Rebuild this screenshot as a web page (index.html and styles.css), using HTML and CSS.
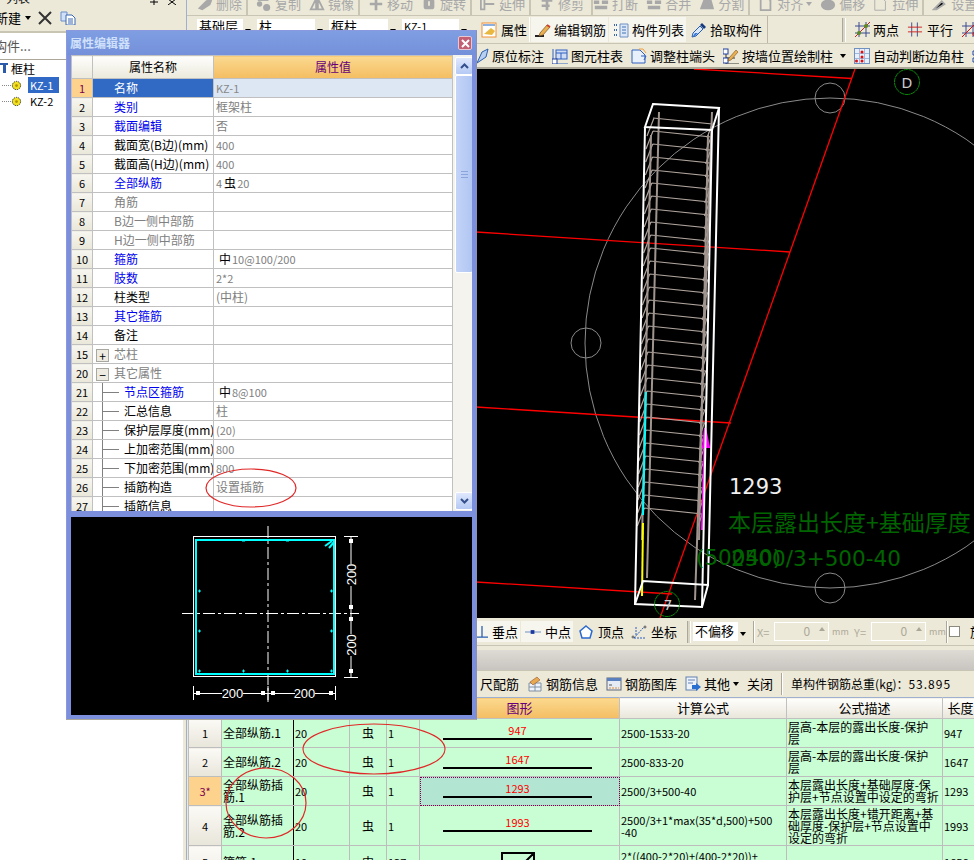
FILE: index.html
```html
<!DOCTYPE html>
<html lang="zh">
<head>
<meta charset="utf-8">
<title>属性编辑器</title>
<link rel="stylesheet" href="styles.css">
</head>
<body>
<div class="app">
  <aside class="side">
    <div class="side-head"><span class="cut">列表</span><span class="side-marks">
      <svg class="mark" viewBox="0 0 12 6"><path d="M6 0v6M2 3h8" stroke="#000"/></svg>
      <svg class="mark" viewBox="0 0 12 6"><path d="M2 0l8 6M10 0L2 6" stroke="#000"/></svg></span></div>
    <div class="side-tools">
      <span class="cut-left">新建</span><span class="caret"></span>
      <svg class="ico-x" viewBox="0 0 14 14"><path d="M1 1l12 12M13 1L1 13" stroke="#333" stroke-width="2"/></svg>
      <svg class="ico-m" viewBox="0 0 16 14"><path d="M1 1h6v9H1z" fill="#cfe0f8" stroke="#6d8ec8"/><path d="M6 4h6l3 3v7H6z" fill="#fff" stroke="#3a66b0"/><path d="M8 8h5M8 10h5M8 12h5" stroke="#3a66b0"/></svg>
    </div>
    <div class="side-search"><span class="search-text">构件...</span></div>
    <ul class="tree">
      <li class="tree-root"><svg class="ico-root" viewBox="0 0 9 13"><path d="M0 1h8v2H0zM3 3h3v8H3z" fill="#2a5aa8"/></svg><span>框柱</span></li>
      <li class="tree-item">
        <span class="dots"></span>
        <svg class="gear" viewBox="0 0 12 12"><circle cx="6" cy="6" r="4.5" fill="#f0e020" stroke="#222" stroke-dasharray="1.5 1"/><circle cx="6" cy="6" r="1.5" fill="#b09000"/></svg>
        <span class="tree-label sel">KZ-1</span>
      </li>
      <li class="tree-item">
        <span class="dots"></span>
        <svg class="gear" viewBox="0 0 12 12"><circle cx="6" cy="6" r="4.5" fill="#f0e020" stroke="#222" stroke-dasharray="1.5 1"/><circle cx="6" cy="6" r="1.5" fill="#b09000"/></svg>
        <span class="tree-label">KZ-2</span>
      </li>
    </ul>
  </aside>

  <main class="main">
    <div class="bar bar-top">
      <span class="t"><svg class="i" viewBox="0 0 18 16"><path d="M1 13l9-9 5-2 2 2-2 5-9 6z" fill="#a8a8a8"/></svg>删除</span>
      <span class="t g6"><svg class="i" viewBox="0 0 18 16"><circle cx="4" cy="8" r="3" fill="#a8a8a8"/><circle cx="12" cy="12" r="4" fill="#a8a8a8"/><path d="M2 3h12" stroke="#a8a8a8" stroke-width="3"/></svg>复制</span>
      <span class="t"><svg class="i" viewBox="0 0 18 16"><path d="M8 2L2 14h6zM10 2l6 12h-6z" fill="none" stroke="#a8a8a8" stroke-width="2"/></svg>镜像</span>
      <span class="t g6"><svg class="i" viewBox="0 0 18 16"><path d="M9 1v14M2 8h14" stroke="#a8a8a8" stroke-width="3"/></svg>移动</span>
      <span class="t"><svg class="i" viewBox="0 0 18 16"><rect x="3" y="2" width="12" height="12" rx="3" fill="#a8a8a8"/><path d="M9 5v5" stroke="#ece9d8" stroke-width="2"/></svg>旋转</span>
      <span class="t g6"><svg class="i" viewBox="0 0 18 16"><path d="M1 2h4v12H1zM6 8h10" stroke="#a8a8a8" stroke-width="2" fill="none"/></svg>延伸</span>
      <span class="t g6"><svg class="i" viewBox="0 0 18 16"><path d="M3 4h12M3 10h9M9 1v14" stroke="#a8a8a8" stroke-width="3"/></svg>修剪</span>
      <span class="t g1"><svg class="i" viewBox="0 0 18 16"><path d="M1 6h6M10 6h7M2 12h14" stroke="#a8a8a8" stroke-width="4"/></svg>打断</span>
      <span class="t"><svg class="i" viewBox="0 0 18 16"><path d="M1 6h6M10 6h7M2 12h14" stroke="#a8a8a8" stroke-width="4"/></svg>合并</span>
      <span class="t"><svg class="i" viewBox="0 0 18 16"><path d="M1 14L5 3h9l3 11z" fill="#a8a8a8"/></svg>分割</span>
      <span class="t g6"><svg class="i" viewBox="0 0 18 16"><path d="M3 1h8l3 3v11H3z" fill="none" stroke="#a8a8a8" stroke-width="2"/></svg>对齐<span class="caret dim"></span></span>
      <span class="t"><svg class="i" viewBox="0 0 18 16"><ellipse cx="9" cy="9" rx="8" ry="6" fill="#a8a8a8"/></svg>偏移</span>
      <span class="t"><svg class="i" viewBox="0 0 18 16"><path d="M2 2h9l3 3v10H2z" fill="none" stroke="#a8a8a8"/></svg>拉伸</span>
      <span class="t g6"><svg class="i" viewBox="0 0 18 16"><path d="M2 14l9-9 3 3-9 6zM2 2h8" stroke="#a8a8a8" stroke-width="2"/></svg>设置</span>
    </div>

    <div class="bar bar-combo">
      <div class="combos">
        <span class="combo c1">基础层<i class="drop"></i></span>
        <span class="combo c2">柱<i class="drop"></i></span>
        <span class="combo c3">框柱<i class="drop"></i></span>
        <span class="combo c4"><span class="lat">KZ-1</span><i class="drop"></i></span>
      </div>
      <div class="btn-group">
        <span class="b on"><svg class="i" viewBox="0 0 16 16"><rect x="1" y="1" width="14" height="14" fill="#fff" stroke="#f09030"/><path d="M2 3h12" stroke="#8cb0e0" stroke-width="2"/><path d="M3 12l7-6 4 3-3 4z" fill="#e8b840"/></svg>属性</span>
        <span class="b st"><svg class="i" viewBox="0 0 16 16"><path d="M0 14h9" stroke="#222" stroke-width="2"/><path d="M5 11l7-8 3 2-7 8-4 1z" fill="#e8b050" stroke="#7a5020" stroke-width=".7"/><path d="M12 3l3 2" stroke="#d04030" stroke-width="2"/></svg>编辑钢筋</span>
        <span class="b st"><svg class="i" viewBox="0 0 16 16"><path d="M7 2h8v13H7z" fill="#dce8f8" stroke="#7090c0"/><path d="M9 5h4M9 8h4M9 11h4" stroke="#4070b0"/><path d="M1 3h3M1 8h3M1 13h3" stroke="#3a66b0" stroke-width="2" stroke-dasharray="1 1"/></svg>构件列表</span>
        <span class="b"><svg class="i" viewBox="0 0 16 16"><path d="M1 15l1-4 7-7 3 3-7 7z" fill="#dbe8fa" stroke="#2a5fb0"/><path d="M9 3l2-2 4 4-2 2z" fill="#183a80"/><path d="M2 14l2-3 3 0-3 3z" fill="#3a7ad8"/></svg>拾取构件</span>
      </div>
      <div class="btn-group2">
        <span class="grip"></span>
        <span class="b2"><svg class="i2" viewBox="0 0 17 17"><path d="M1 5h15M1 12h15M5 1v15M12 1v15" stroke="#3a4a90"/><path d="M1 16L16 1" stroke="#d02020"/><circle cx="12" cy="5" r="2" fill="#5a8a20"/><circle cx="5" cy="12" r="2" fill="#5a8a20"/></svg>两点</span>
        <span class="b2"><svg class="i2 n" viewBox="0 0 17 17"><path d="M5 1v15M11 1v15" stroke="#3a4a90"/><path d="M1 6h15M1 11h15" stroke="#d02020"/></svg>平行</span>
        <span class="b2"><svg class="i2" viewBox="0 0 17 17"><path d="M1 5h15M1 12h15M5 1v15M12 1v15" stroke="#3a4a90"/><path d="M1 16L16 1" stroke="#e01010"/><circle cx="14" cy="13" r="2" fill="none" stroke="#e01010"/></svg></span>
      </div>
    </div>

    <div class="bar bar-third">
      <span class="t3"><svg class="i3 clip" viewBox="0 0 12 16"><path d="M0 15l5-11 6-3-2 8z" fill="#b9cff0" stroke="#2a5fb0"/></svg>原位标注</span>
      <span class="t3"><svg class="i3" viewBox="0 0 16 16"><path d="M1 1v15h15" fill="none" stroke="#3060c0"/><rect x="4" y="2" width="11" height="9" fill="#cfdcf4" stroke="#3060c0"/><path d="M4 5h11M9 5v6" stroke="#3060c0"/><rect x="0" y="11" width="5" height="5" fill="#fff" stroke="#2040a0"/></svg>图元柱表</span>
      <span class="t3"><svg class="i3" viewBox="0 0 16 16"><path d="M1 2h8l5 5v8H1z" fill="#e8f0fc" stroke="#3060c0"/><path d="M8 1h4l3 4" fill="none" stroke="#f0a040"/><path d="M10 8h5l-2 4" fill="none" stroke="#3060c0"/></svg>调整柱端头</span>
      <span class="t3"><svg class="i3" viewBox="0 0 16 16"><path d="M3 1v15h13M3 10h9" fill="none" stroke="#333"/><rect x="0" y="1" width="5" height="5" fill="#fff" stroke="#2040a0"/><rect x="0" y="10" width="5" height="5" fill="#fff" stroke="#2040a0"/><path d="M6 10l7-8 2 2-7 8-3 1z" fill="#e8b050" stroke="#7a5020" stroke-width=".6"/></svg>按墙位置绘制柱<span class="caret gap"></span></span>
      <span class="t3"><svg class="i3" viewBox="0 0 16 16"><rect x=".5" y=".5" width="15" height="15" fill="#e8effa" stroke="#7090c0"/><path d="M5.5 1v14M10.5 1v14M1 5.5h14M1 10.5h14" stroke="#a0b8dc"/><circle cx="8" cy="4" r="1.5" fill="#e01010"/><circle cx="8" cy="9" r="1.5" fill="#e01010"/><circle cx="2.500" cy="13" r="1.500" fill="#e01010"/><circle cx="8" cy="13" r="1.500" fill="#e01010"/></svg>自动判断边角柱</span>
      <svg class="i3" viewBox="0 0 16 16"><path d="M1 3h4v4H1zM1 10h4v4H1z" fill="#fff" stroke="#2040a0"/><path d="M6 5h9M6 12h9" stroke="#2040a0"/></svg>
    </div>

    <svg class="cad" viewBox="187 69 787 549">
      <rect x="186" y="69" width="788" height="549" fill="#000"/>
      <g fill="none" stroke="#8a8a8a">
        <circle cx="830" cy="343" r="245"/>
        <circle cx="830" cy="98" r="15"/>
        <circle cx="586" cy="343" r="15"/>
        <circle cx="830" cy="588" r="15"/>
      </g>
      <g fill="none" stroke="#f00" stroke-width="1.300">
        <path d="M694 69L852 78.500"/>
        <path d="M476 232L790 252"/>
        <path d="M476 407L731 423"/>
        <path d="M476 582L672 594"/>
        <path d="M855 69L660 618"/>
      </g>
      <path fill="none" stroke="#b0a59e" stroke-width="1.200" d="M653 118
        l59 6-5 14m-53-20l-7 18m6-5 l58 6-5 14m-53-20l-7 18m6.700-5 l58 6-5 14m-53-20l-7 18m6.700-5 l58 6-5 14m-53-20l-7 18m6.700-5
        l58 6-5 14m-53-20l-7 18m6.700-5 l58 6-5 14m-53-20l-7 18m6.700-5 l58 6-5 14m-53-20l-7 18m6.700-5 l58 6-5 14m-53-20l-7 18m6.700-5
        l58 6-5 14m-53-20l-7 18m6.700-5 l58 6-5 14m-53-20l-7 18m6.700-5 l58 6-5 14m-53-20l-7 18m6.700-5 l58 6-5 14m-53-20l-7 18m6.700-5
        l58 6-5 14m-53-20l-7 18m6.700-5 l58 6-5 14m-53-20l-7 18m6.700-5 l58 6-5 14m-53-20l-7 18m6.700-5 l58 6-5 14m-53-20l-7 18m6.700-5
        l58 6-5 14m-53-20l-7 18m6.700-5 l58 6-5 14m-53-20l-7 18m6.700-5 l58 6-5 14m-53-20l-7 18m6.700-5 l58 6-5 14m-53-20l-7 18m6.700-5
        l58 6-5 14m-53-20l-7 18m6.700-5 l58 6-5 14m-53-20l-7 18m6.700-5 l58 6-5 14m-53-20l-7 18m6.700-5 l58 6-5 14m-53-20l-7 18m6.700-5
        l58 6-5 14m-53-20l-7 18m6.700-5 l58 6-5 14m-53-20l-7 18m6.700-5 l58 6-5 14m-53-20l-7 18m6.700-5 l58 6-5 14m-53-20l-7 18m6.700-5
        l58 6-5 14m-53-20l-7 18m6.700-5 l58 6-5 14m-53-20l-7 18m6.700-5 l58 6-5 14m-53-20l-7 18"/>
      <g fill="none" stroke="#a0958e" stroke-width="2">
        <path d="M659 112L647 578"/>
        <path d="M651 135L642 540"/>
        <path d="M712 112L695 600"/>
        <path d="M708 135L699 540"/>
      </g>
      <path d="M646 392L643 515" stroke="#0ff" stroke-width="2"/>
      <path d="M643 523L642 596" stroke="#ff0" stroke-width="2"/>
      <path d="M705 428L702 530" stroke="#f0f" stroke-width="2"/>
      <path d="M705 428l-2 19 6 0z" fill="#f0f" stroke="#f0f" stroke-width="2"/>
      <g fill="none" stroke="#fff" stroke-width="2">
        <path d="M653 104L719 108L712 130L645 127Z"/>
        <path d="M645 127L635 604L702 607L712 130"/>
        <path d="M719 108L708 585L643 581L635 604"/>
        <path d="M708 585L702 607"/>
      </g>
      <circle cx="907" cy="82" r="12.500" fill="none" stroke="#0a8a0a" stroke-dasharray="5 .5"/>
      <circle cx="667" cy="604" r="12.500" fill="none" stroke="#0a8a0a" stroke-dasharray="5 .5"/>
      <text class="cad-mark" x="907" y="88" text-anchor="middle">D</text>
      <text class="cad-mark" x="668" y="610" text-anchor="middle">7</text>
      <text class="cad-num" x="729" y="494">1293</text>
      <text class="cad-cn" x="728" y="531">本层露出长度+基础厚度</text>
      <text class="cad-lat" x="696" y="565">(50040)</text>
      <text class="cad-lat" x="731" y="566">2500/3+500-40</text>
    </svg>

    <div class="bar bar-snap">
      <span class="s st first"><svg class="i4" viewBox="0 0 14 16"><path d="M7 1v13M0 14h14" stroke="#2a5fb0" stroke-width="1.500"/></svg>垂点</span>
      <span class="s st"><svg class="i5" viewBox="0 0 17 16"><path d="M0 8h17" stroke="#6a8ac0"/><rect x="6" y="6" width="4" height="4" fill="#1a3aa0"/></svg>中点</span>
      <span class="s"><svg class="i5" viewBox="0 0 16 16"><path d="M8 2l6 5-2 7H4L2 7z" fill="#fff" stroke="#2a6ad0" stroke-width="1.500"/></svg>顶点</span>
      <span class="s"><svg class="i5" viewBox="0 0 16 16"><path d="M3 14h12M3 14L13 3M5 3v8" fill="none" stroke="#2a5fc0" stroke-dasharray="2 1"/><circle cx="2" cy="13" r="1" fill="none" stroke="#555"/><circle cx="14" cy="3" r="1" fill="none" stroke="#555"/></svg>坐标</span>
      <span class="grip g2"></span>
      <span class="offset">不偏移<i class="drop"></i></span>
      <span class="sep"></span>
      <span class="lab">X=</span><span class="inp">0<i class="spin"></i></span><span class="mm">mm</span>
      <span class="lab y">Y=</span><span class="inp">0<i class="spin"></i></span><span class="mm">mm</span>
      <span class="sep end"></span>
      <span class="chk"></span><span class="rot">旋</span>
    </div>
    <div class="divide"></div>
    <div class="strip"></div>

    <div class="bar bar-bot">
      <span class="t3">尺配筋</span>
      <span class="t3"><svg class="i3" viewBox="0 0 16 16"><path d="M2 7h12v8H2z" fill="#eef3fb" stroke="#8090a0"/><path d="M8 7v8M2 11h12" stroke="#8090a0"/><path d="M3 6l7-5 3 3-7 5z" fill="#e8a850" stroke="#804020" stroke-width=".5"/></svg>钢筋信息</span>
      <span class="t3"><svg class="i3" viewBox="0 0 16 16"><rect x="1" y="2" width="14" height="12" fill="#e6ecf6" stroke="#606878"/><path d="M1 2h14v3H1z" fill="#5a80c0"/><path d="M3 9h3" stroke="#555"/><path d="M3 12h10" stroke="#e09030" stroke-dasharray="2 1"/></svg>钢筋图库</span>
      <span class="t3"><svg class="i3" viewBox="0 0 16 16"><rect x="1" y="1" width="11" height="13" fill="#eef3fb" stroke="#6080b0"/><path d="M3 4h7M3 7h5" stroke="#6080b0"/><path d="M7 9h4V7l5 4-5 4v-2H7z" fill="#2a70d0"/></svg>其他<span class="caret gap0"></span></span>
      <span class="t3">关闭</span>
      <span class="sep s2"></span>
      <span class="total">单构件钢筋总重(kg)：<span class="total-v">53.895</span></span>
    </div>

    <table class="rebar">
      <colgroup><col class="k0"><col class="k1"><col class="k2"><col class="k3"><col class="k4"><col class="k5"><col class="k6"><col class="k7"><col class="k8"></colgroup>
      <thead><tr><th></th><th>筋号</th><th>直径</th><th>级别</th><th>根数</th><th class="hot">图形</th><th>计算公式</th><th>公式描述</th><th>长度</th></tr></thead>
      <tbody>
        <tr class="r1"><td class="rn">1</td><td class="nm">全部纵筋.1</td><td class="lat">20</td><td class="gr">虫</td><td class="lat">1</td><td class="sh"><span class="shape">947</span></td><td class="lat">2500-1533-20</td><td class="ds">层高-本层的露出长度-保护<br>层</td><td class="lat">947</td></tr>
        <tr class="r1"><td class="rn">2</td><td class="nm">全部纵筋.2</td><td class="lat">20</td><td class="gr">虫</td><td class="lat">1</td><td class="sh"><span class="shape">1647</span></td><td class="lat">2500-833-20</td><td class="ds">层高-本层的露出长度-保护<br>层</td><td class="lat">1647</td></tr>
        <tr class="r1"><td class="rn cur">3*</td><td class="nm">全部纵筋插<br>筋.1</td><td class="lat">20</td><td class="gr">虫</td><td class="lat">1</td><td class="sh focus"><span class="shape">1293</span></td><td class="lat">2500/3+500-40</td><td class="ds">本层露出长度+基础厚度-保<br>护层+节点设置中设定的弯折</td><td class="lat">1293</td></tr>
        <tr class="r2"><td class="rn">4</td><td class="nm">全部纵筋插<br>筋.2</td><td class="lat">20</td><td class="gr">虫</td><td class="lat">1</td><td class="sh"><span class="shape">1993</span></td><td class="lat">2500/3+1*max(35*d,500)+500<br>-40</td><td class="ds">本层露出长度+错开距离+基<br>础厚度-保护层+节点设置中<br>设定的弯折</td><td class="lat">1993</td></tr>
        <tr class="r3"><td class="rn low">5</td><td class="nm low">箍筋.1</td><td class="lat low">10</td><td class="gr low">中</td><td class="lat low">137</td><td class="sh-box"><svg class="stir" viewBox="0 0 34 30"><path d="M1 29V1h32v28zM20 14L32 2" fill="none" stroke="#000" stroke-width="2"/></svg></td><td class="lat up">2*((400-2*20)+(400-2*20))+</td><td></td><td class="lat low">1656</td></tr>
      </tbody>
    </table>
  </main>
</div>

<section class="dialog">
  <header class="dlg-title"><span>属性编辑器</span><span class="dlg-close"><svg viewBox="0 0 9 9"><path d="M1 1l7 7M8 1L1 8" stroke="#fff" stroke-width="2"/></svg></span></header>
  <div class="dlg-body">
    <div class="pg-wrap">
      <table class="pg">
        <colgroup><col class="p0"><col class="p1"><col class="p2"></colgroup>
        <thead><tr><th></th><th>属性名称</th><th class="hot">属性值</th></tr></thead>
        <tbody>
          <tr><td class="rn cur">1</td><td class="sel-name"><span class="in1">名称</span></td><td class="sel-val lat">KZ-1</td></tr>
          <tr><td class="rn">2</td><td class="link"><span class="in1">类别</span></td><td class="val">框架柱</td></tr>
          <tr><td class="rn">3</td><td class="link"><span class="in1">截面编辑</span></td><td class="val">否</td></tr>
          <tr><td class="rn">4</td><td><span class="in1">截面宽(B边)(mm)</span></td><td class="val lat">400</td></tr>
          <tr><td class="rn">5</td><td><span class="in1">截面高(H边)(mm)</span></td><td class="val lat">400</td></tr>
          <tr><td class="rn">6</td><td class="link"><span class="in1">全部纵筋</span></td><td class="val lat">4<b class="sym">虫</b>20</td></tr>
          <tr><td class="rn">7</td><td class="dim-t"><span class="in1">角筋</span></td><td></td></tr>
          <tr><td class="rn">8</td><td class="dim-t"><span class="in1">B边一侧中部筋</span></td><td></td></tr>
          <tr><td class="rn">9</td><td class="dim-t"><span class="in1">H边一侧中部筋</span></td><td></td></tr>
          <tr><td class="rn">10</td><td class="link"><span class="in1">箍筋</span></td><td class="val lat"><b class="sym ind">中</b>10@100/200</td></tr>
          <tr><td class="rn">11</td><td class="link"><span class="in1">肢数</span></td><td class="val lat">2*2</td></tr>
          <tr><td class="rn">12</td><td><span class="in1">柱类型</span></td><td class="val">(中柱)</td></tr>
          <tr><td class="rn">13</td><td class="link"><span class="in1">其它箍筋</span></td><td></td></tr>
          <tr><td class="rn">14</td><td><span class="in1">备注</span></td><td></td></tr>
          <tr><td class="rn">15</td><td class="dim-t"><span class="exp">+</span><span class="in2">芯柱</span></td><td></td></tr>
          <tr><td class="rn">20</td><td class="dim-t"><span class="exp">−</span><span class="in2">其它属性</span></td><td></td></tr>
          <tr><td class="rn">21</td><td class="link kid"><span class="in3">节点区箍筋</span></td><td class="val lat"><b class="sym ind">中</b>8@100</td></tr>
          <tr><td class="rn">22</td><td class="kid"><span class="in3">汇总信息</span></td><td class="val">柱</td></tr>
          <tr><td class="rn">23</td><td class="kid"><span class="in3">保护层厚度(mm)</span></td><td class="val lat">(20)</td></tr>
          <tr><td class="rn">24</td><td class="kid"><span class="in3">上加密范围(mm)</span></td><td class="val lat">800</td></tr>
          <tr><td class="rn">25</td><td class="kid"><span class="in3">下加密范围(mm)</span></td><td class="val lat">800</td></tr>
          <tr><td class="rn">26</td><td class="kid"><span class="in3">插筋构造</span></td><td class="val">设置插筋</td></tr>
          <tr><td class="rn">27</td><td class="kid"><span class="in3">插筋信息</span></td><td></td></tr>
        </tbody>
      </table>
      <div class="vs">
        <span class="vs-btn"><svg viewBox="0 0 9 6"><path d="M1 5l3.500-3.500L8 5" fill="none" stroke="#33508c" stroke-width="2"/></svg></span>
        <span class="vs-thumb"><i></i></span>
        <span class="vs-track"></span>
        <span class="vs-btn"><svg viewBox="0 0 9 6"><path d="M1 1l3.500 3.500L8 1" fill="none" stroke="#33508c" stroke-width="2"/></svg></span>
      </div>
    </div>
    <svg class="preview" viewBox="71 517 401 198">
      <rect x="71" y="517" width="401" height="198" fill="#000"/>
      <g fill="none" stroke="#fff">
        <rect x="193.500" y="536.500" width="142" height="140"/>
        <path d="M268 526v176M182 613.500h177" stroke-dasharray="12 3 3 3"/>
        <path d="M351 537v27M351 586v48M351 656v21M344 536.500h14M344 677.500h14"/>
        <path d="M194 693.500h28M243 693.500h52M315 693.500h21M193.500 686v14M335.500 686v14M268 686v14"/>
      </g>
      <g fill="#fff">
        <rect x="349" y="539" width="4" height="4"/><rect x="349" y="605" width="4" height="4"/><rect x="349" y="617" width="4" height="4"/><rect x="349" y="669" width="4" height="4"/>
        <rect x="196" y="691" width="4" height="4"/><rect x="261" y="691" width="4" height="4"/><rect x="271" y="691" width="4" height="4"/><rect x="329" y="691" width="4" height="4"/>
      </g>
      <rect x="196" y="540" width="138" height="134" fill="none" stroke="#0ff" stroke-width="2"/>
      <path d="M325 546l7-5M329 548l5-6" stroke="#0ff" stroke-width="2"/>
      <path d="M198 591h3M199.500 589.500v3M198 631h3M199.500 629.500v3M198 671h3M199.500 669.500v3M330 591h3M331.500 589.500v3M330 631h3M331.500 629.500v3M330 671h3M331.500 669.500v3M242 671h3M243.500 669.500v3M286 671h3M287.500 669.500v3M242 541h3M286 541h3" stroke="#0ff"/>
      <text class="dim-text" x="232.500" y="698" text-anchor="middle">200</text>
      <text class="dim-text" x="304.500" y="698" text-anchor="middle">200</text>
      <text class="dim-text" text-anchor="middle" transform="translate(355.500 574.500) rotate(-90)">200</text>
      <text class="dim-text" text-anchor="middle" transform="translate(355.500 645) rotate(-90)">200</text>
    </svg>
  </div>
</section>

<svg class="marks" viewBox="0 0 974 860">
  <g fill="none" stroke="#e02828" stroke-width="1.200">
    <ellipse cx="251" cy="488" rx="45" ry="19"/>
    <ellipse cx="374" cy="749" rx="71" ry="25"/>
    <ellipse cx="266" cy="803" rx="40" ry="35"/>
  </g>
</svg>
</body>
</html>
```

FILE: styles.css
```css
* { box-sizing: border-box; }
html, body { margin: 0; padding: 0; }
body {
  width: 974px;
  height: 860px;
  overflow: hidden;
  position: relative;
  background: #ece9d8;
  color: #000;
  font: 12px/14px "Noto Sans CJK SC", "Noto Sans", sans-serif;
}
svg { display: block; flex: none; }
.lat { font-size: 11px; }
.app { display: flex; width: 974px; height: 860px; }

/* left panel */
.side { width: 183px; flex: none; display: flex; flex-direction: column; background: #fff; overflow: hidden; }
.side > * { flex: none; }
.side-head { height: 5px; background: #ece9d8; display: flex; justify-content: space-between; align-items: flex-end; overflow: hidden; }
.cut { margin-left: 6px; line-height: 14px; color: #222; }
.side-marks { display: flex; gap: 6px; padding-right: 5px; }
.mark { width: 12px; height: 6px; }
.side-tools { height: 28px; background: #ece9d8; border-bottom: 2px solid #c8c5b4; display: flex; align-items: center; }
.cut-left { margin-left: -5px; font-size: 13px; }
.caret { display: inline-block; width: 0; height: 0; margin-left: 4px; border: 3px solid transparent; border-top: 4px solid #000; border-bottom: 0; }
.caret.dim { border-top-color: #a8a8a8; margin-left: 0; }
.caret.gap { margin-left: 4px; }
.caret.gap0 { margin-left: 0; }
.ico-x { width: 14px; height: 14px; margin-left: 7px; }
.ico-m { width: 16px; height: 14px; margin-left: 8px; }
.side-search { height: 27px; display: flex; align-items: center; border-bottom: 1px solid #aca899; }
.search-text { margin-left: -6px; color: #555; font-size: 13px; }
.tree { list-style: none; margin: 0; padding: 0; background: #fff; }
.tree li { display: flex; align-items: center; }
.tree-root { height: 17px; }
.ico-root { width: 9px; height: 13px; margin-right: 2px; }
.tree-item { height: 16px; }
.dots { width: 9px; border-top: 1px dotted #888; margin-left: 2px; }
.gear { width: 11px; height: 11px; margin: 0 6px 0 0; }
.tree-label { width: 31px; height: 16px; font-size: 11px; line-height: 16px; padding-left: 2px; }
.tree-label.sel { background: #3169c6; color: #fff; }

/* main column */
.main { flex: 1; min-width: 0; display: flex; flex-direction: column; border-left: 1px solid #9db0d0; margin-left: 3px; overflow: hidden; }
.main > * { flex: none; }
.bar { display: flex; background: #ece9d8; white-space: nowrap; }
.bar > * { flex: none; }
.bar-top { height: 16px; align-items: flex-end; overflow: hidden; color: #a8a8a8; font-size: 13px; border-bottom: 1px solid #c8c5b4; padding-left: 10px; gap: 8px; }
.t { display: flex; align-items: center; height: 22px; gap: 3px; }
.t.g6 { margin-left: -4px; padding-left: 8px; border-left: 2px solid #c8c5b4; }
.t.g1 { margin-left: -1px; border-left: 2px solid #c8c5b4; }
.i { width: 16px; height: 16px; }
.bar-combo { height: 28px; align-items: center; border-bottom: 1px solid #c8c5b4; }
.combos { display: flex; width: 289px; padding-left: 10px; gap: 3px; align-self: flex-start; margin-top: 3px; }
.combo { height: 20px; background: #fff; position: relative; padding-left: 2px; font-size: 13px; line-height: 14px; }
.combo .lat { font-size: 11px; }
.c1 { width: 57px; } .c2 { width: 69px; } .c3 { width: 70px; } .c4 { width: 68px; }
.drop { position: absolute; top: 0; right: 0; bottom: 0; width: 11px; background: #ece9d8; }
.drop::after { content: ""; position: absolute; top: 50%; left: 2px; border: 3px solid transparent; border-top: 4px solid #000; border-bottom: 0; }
.btn-group { display: flex; width: 292px; height: 27px; align-items: center; gap: 1px; border-right: 1px solid #bdb9a6; font-size: 13px; }
.b { display: flex; align-items: center; height: 25px; padding: 0 2px 0 4px; gap: 3px; }
.b.on { width: 54px; padding-left: 5px; gap: 4px; background: #ece9d8; border-right: 1px solid #fff; }
.b.st { background: #f6f5ee; }
.btn-group2 { display: flex; align-items: center; gap: 8px; margin-left: 74px; font-size: 13px; }
.grip { width: 4px; height: 24px; border-left: 1px solid #aca899; border-right: 1px solid #fff; background: #d8d5c4; }
.b2 { display: flex; align-items: center; gap: 2px; }
.i2 { width: 17px; height: 17px; }
.i2.n { width: 16px; margin-right: 2px; }
.bar-third { height: 25px; align-items: center; gap: 8px; padding-left: 290px; border-bottom: 2px solid #aca899; font-size: 13px; }
.t3 { display: flex; align-items: center; gap: 3px; }
.i3 { width: 16px; height: 16px; }
.i3.clip { width: 12px; }

/* CAD canvas */
.cad { width: 787px; height: 549px; flex: none; background: #000; }
.cad-mark { font: 14px "DejaVu Sans", sans-serif; fill: #ccc; }
.cad-num { font: 21px "DejaVu Sans", sans-serif; fill: #f0f0f0; }
.cad-cn { font: 23px "Noto Sans CJK SC", sans-serif; fill: #006400; }
.cad-lat { font: 21.500px "DejaVu Sans", sans-serif; fill: #006400; }

/* snap bar */
.bar-snap { height: 27px; align-items: center; padding-left: 289px; font-size: 13px; }
.s { display: flex; align-items: center; gap: 4px; height: 21px; padding: 0 2px 0 4px; margin-right: 1px; }
.s.first { padding-left: 0; }
.s.st { background: #f6f5ee; }
.i4 { width: 12px; height: 16px; }
.i5 { width: 16px; height: 16px; }
.g2 { margin: 0 2px 0 7px; height: 22px; }
.offset { position: relative; width: 56px; height: 19px; background: #fff; line-height: 17px; padding-left: 2px; }
.sep { width: 2px; height: 22px; border-left: 1px solid #aca899; border-right: 1px solid #fff; margin: 0 2px 0 4px; }
.sep.end { margin: 0 0 0 3px; }
.lab { color: #b0ad9e; font-size: 11px; width: 13px; }
.lab.y { margin-left: 8px; }
.inp { position: relative; width: 55px; height: 19px; margin-left: 4px; border: 1px solid #fff; text-align: right; padding-right: 18px; color: #aca899; font-size: 12px; line-height: 15px; }
.spin { position: absolute; right: 3px; top: 4px; width: 0; height: 0; border: 3px solid transparent; border-bottom: 4px solid #aca899; border-top: 0; }
.mm { color: #aca899; font-size: 9px; margin-left: 3px; width: 14px; }
.chk { width: 11px; height: 11px; background: #fff; border: 1px solid #8a8a80; margin-left: 1px; }
.rot { margin-left: 10px; font-size: 13px; }
.divide { height: 5px; background: #ece9d8; border-top: 1px solid #c8c5b4; }
.strip { height: 20px; background: linear-gradient(#dedbd5, #c8c5c0); }
.bar-bot { height: 27px; align-items: center; gap: 8px; padding-left: 293px; border-top: 1px solid #c8c5b4; font-size: 13px; }
.sep.s2 { height: 22px; margin: 0; }
.total { font-size: 12px; }
.total-v { font-size: 12px; letter-spacing: 1px; }

/* rebar table */
.rebar { width: 790px; table-layout: fixed; border-collapse: collapse; background: #c9fdd3; border-top: 1px solid #9db0d0; margin-left: 1px; }
.k0 { width: 33px; } .k1 { width: 72px; } .k2 { width: 56px; } .k3 { width: 37px; } .k4 { width: 33px; } .k5 { width: 200px; } .k6 { width: 167px; } .k7 { width: 156px; } .k8 { width: 36px; }
.rebar th { height: 21px; padding: 0; font-weight: 400; font-size: 13px; background: linear-gradient(#fefefc, #e9e6da); border: 1px solid #c0c0c0; border-top: 0; }
.hot, .rebar th.hot, .pg th.hot { background: linear-gradient(#fbd98f, #f4bd62); color: #66007a; }
.rebar td { padding: 0 0 0 1px; border: 1px solid #bdbdbd; line-height: 12px; overflow: hidden; vertical-align: middle; }
.rebar td.rn { padding: 0; text-align: center; background: linear-gradient(#fbfaf5, #e8e5da); font-size: 11px; }
.rebar td.rn.cur { background: #fdd28c; color: #7a0050; }
.r1 td { height: 29px; }
.r2 td { height: 40px; }
.r3 td { height: 50px; }
.rebar td.nm { font-size: 12px; }
.rebar tbody td:nth-child(2) { border-right: 1px solid #000; }
.rebar td.gr { text-align: center; padding: 0; }
.rebar td.sh { padding: 0 27px 0 23px; text-align: center; }
.shape { display: block; height: 16px; color: #f00; font-size: 11px; line-height: 12px; border-bottom: 2px solid #000; margin-top: -3px; }
.focus { outline: 1px dotted #7a0050; outline-offset: -1px; }
.rebar td.focus { background: #b3e6d2; }
.ds { line-height: 12px; }
.rebar td.low { vertical-align: top; padding-top: 10px; }
.rebar td.up { vertical-align: top; padding-top: 4px; }
.rebar td.sh-box { vertical-align: top; padding: 6px 4px 0 0; }
.stir { width: 34px; height: 30px; margin: 0 auto; }

/* dialog */
.dialog { position: absolute; left: 66px; top: 30px; width: 411px; height: 690px; padding: 0 4px 4px; background: #7b8fdd; border: 1px solid #8a98e0; border-bottom-color: #aca899; border-right-color: #8a90b8; display: flex; flex-direction: column; }
.dlg-title { height: 24px; flex: none; display: flex; justify-content: space-between; align-items: center; color: #cfe0fa; font-weight: 700; font-size: 12px; background: linear-gradient(#7f9ee2, #7490da); margin: 0 -4px; padding: 0 4px 0 3px; }
.dlg-close { width: 14px; height: 14px; background: #c35f74; border: 1px solid #e6c8d2; border-radius: 2px; display: flex; align-items: center; justify-content: center; }
.dlg-close svg { width: 9px; height: 9px; }
.dlg-body { flex: 1; display: flex; flex-direction: column; min-height: 0; }
.pg-wrap { display: flex; height: 456px; flex: none; background: #fff; overflow: hidden; }
.pg { width: 381px; flex: none; table-layout: fixed; border-collapse: collapse; align-self: flex-start; }
.p0 { width: 21px; } .p1 { width: 121px; } .p2 { width: 239px; }
.pg th { height: 23px; padding: 0; font-weight: 400; font-size: 12px; background: linear-gradient(#fefefc, #ece9dc); border: 1px solid #c0c0c0; }
.pg td { height: 19px; padding: 0; border: 1px solid #c0c0c0; line-height: 14px; white-space: nowrap; overflow: hidden; }
.pg .rn { text-align: center; background: linear-gradient(#f7f6f0, #e9e7d9); font-size: 11px; }
.pg .rn.cur { background: #fdd28c; color: #7a0050; }
.sel-name { background: #316ac5; color: #fff; }
.pg td.sel-val { background: #dde6f3; color: #888; padding-left: 2px; }
.link { color: #0000f0; }
.pg td.val { color: #808080; padding-left: 2px; }
.dim-t { color: #808080; }
.in1 { margin-left: 21px; }
.in2 { margin-left: 5px; }
.in3 { margin-left: 31px; }
.kid { background: linear-gradient(#808080, #808080) 9px 0 / 1px 100% no-repeat, linear-gradient(#808080, #808080) 9px 9px / 17px 1px no-repeat; }
.exp { display: inline-flex; width: 13px; height: 13px; margin-left: 3px; align-items: center; justify-content: center; background: #eeece2; border: 1px solid #a8a8a0; color: #000; font-size: 12px; line-height: 11px; vertical-align: -2px; }
.sym { font-weight: 400; color: #000; font-size: 12px; margin: 0 1px 0 2px; }
.sym.ind { margin: 0 1px 0 3px; }
.vs { width: 20px; flex: none; display: flex; flex-direction: column; padding: 2px 0 1px 2px; background: #f4f3ee; }
.vs-btn { height: 18px; flex: none; display: flex; align-items: center; justify-content: center; background: linear-gradient(#dfe8fd, #b5c9f4); border: 1px solid #fff; border-radius: 2px; }
.vs-btn svg { width: 9px; height: 6px; }
.vs-thumb { height: 198px; flex: none; display: flex; align-items: center; justify-content: center; background: linear-gradient(90deg, #c4d4f8, #b0c6f2); border: 1px solid #fff; border-radius: 2px; }
.vs-thumb i { width: 7px; height: 7px; border-top: 1px solid #8aa4dc; border-bottom: 1px solid #8aa4dc; background: linear-gradient(#8aa4dc, #8aa4dc) 0 2px / 100% 1px no-repeat; }
.vs-track { flex: 1; }
.preview { width: 401px; height: 198px; margin-top: 6px; flex: none; }
.dim-text { font: 13px "Liberation Sans", sans-serif; fill: #fff; }

/* hand-drawn review marks over everything */
.marks { position: absolute; left: 0; top: 0; width: 974px; height: 860px; pointer-events: none; }
```
